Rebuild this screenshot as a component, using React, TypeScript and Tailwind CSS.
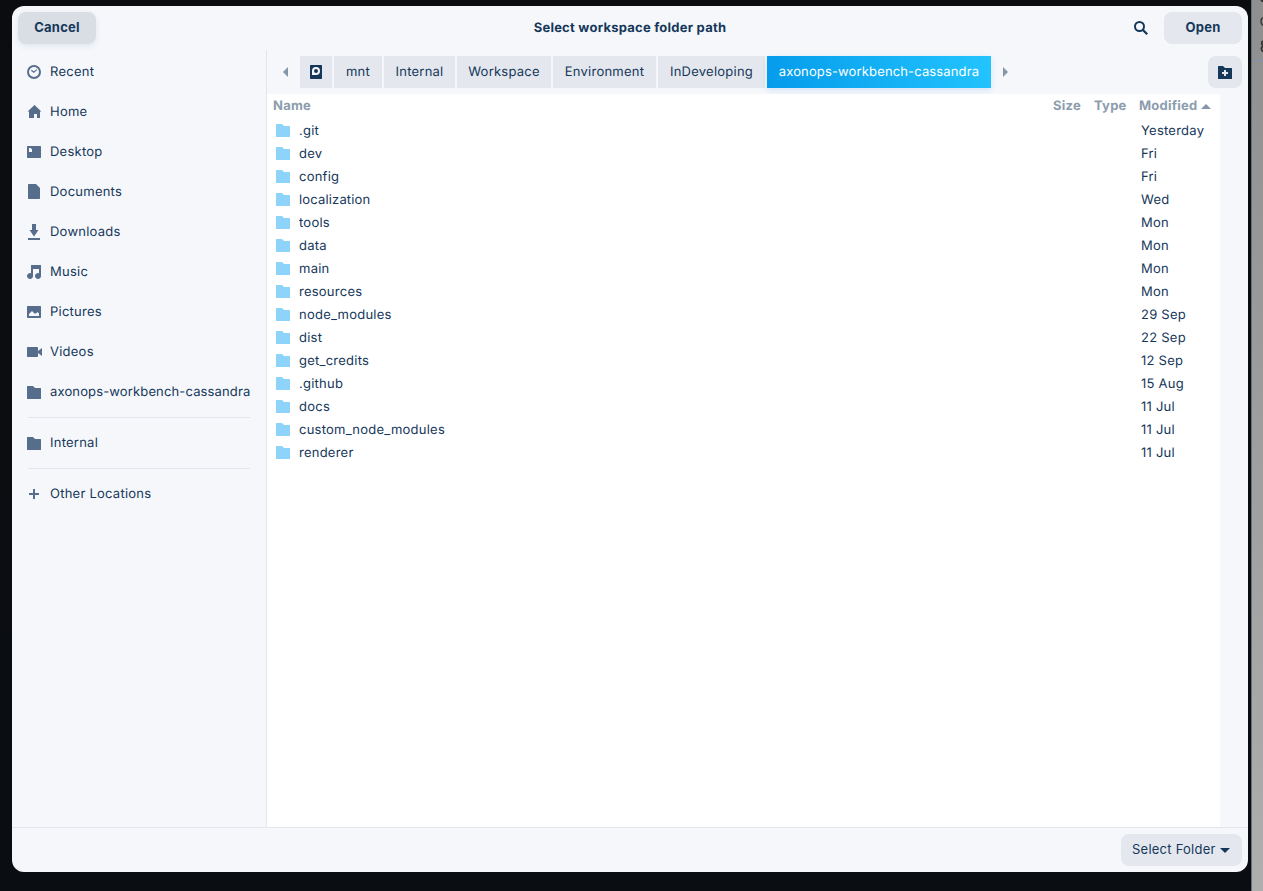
import React from "react";

const PANEL = "#566e8b";

type IconName =
  | "recent"
  | "home"
  | "desktop"
  | "document"
  | "download"
  | "music"
  | "picture"
  | "video"
  | "folder"
  | "plus";

function Folder({ color }: { color: string }) {
  return (
    <svg width="16" height="16" viewBox="0 0 16 16" fill={color}>
      <path d="M1.6 2H7L9 4h5.4c.4 0 .6.2.6.6v9.8c0 .4-.2.6-.6.6H1.6c-.4 0-.6-.2-.6-.6V2.6c0-.4.2-.6.6-.6z" />
    </svg>
  );
}

function Icon({ name }: { name: IconName }) {
  if (name === "folder") return <Folder color={PANEL} />;
  return (
    <svg width="16" height="16" viewBox="0 0 16 16" fill={PANEL}>
      {name === "recent" && (
        <g fill="none" stroke={PANEL}>
          <circle cx="8" cy="8" r="6" strokeWidth="2" />
          <path d="M5.3 6.2 7.8 8.2 10.8 5.6" strokeWidth="1.2" />
        </g>
      )}
      {name === "home" && <path d="M8.5 1 15.4 7.6H14V14h-3v-4H8v4H3V7.6H1.6z" />}
      {name === "desktop" && (
        <path
          fillRule="evenodd"
          d="M1.7 2h12.6c.4 0 .7.3.7.7v10.6c0 .4-.3.7-.7.7H1.7c-.4 0-.7-.3-.7-.7V2.7c0-.4.3-.7.7-.7zM3 4v4h3V5.3L4.7 4z"
        />
      )}
      {name === "document" && (
        <path d="M2.7 0H10l4 4v10.3c0 .4-.3.7-.7.7H2.7c-.4 0-.7-.3-.7-.7V.7c0-.4.3-.7.7-.7z" />
      )}
      {name === "download" && <path d="M6 0h4v6h2.5L8 12.500 3.500 6H6zM2 14h12v2H2z" />}
      {name === "music" && (
        <path d="M5 1h10v11a3 3 0 1 1-2-2.800V5H7v7a3 3 0 1 1-2-2.800z" />
      )}
      {name === "picture" && (
        <path
          fillRule="evenodd"
          d="M1.7 2h12.6c.4 0 .7.3.7.7v10.6c0 .4-.3.7-.7.7H1.7c-.4 0-.7-.3-.7-.7V2.7c0-.4.3-.7.7-.7zM3 12h10V9.500L11.500 8 10 9.500H8.500L6 7 3 10z"
        />
      )}
      {name === "video" && (
        <path d="M1.7 3h9.6c.4 0 .7.3.7.7V7l4-3v8l-4-3v3.3c0 .4-.3.7-.7.7H1.7c-.4 0-.7-.3-.7-.7V3.7c0-.4.3-.7.7-.7z" />
      )}
      {name === "plus" && <path d="M7 3h2v4h4v2H9v4H7V9H3V7h4z" />}
    </svg>
  );
}

function Place({ icon, label }: { icon: IconName; label: string }) {
  return (
    <div className="flex h-10 items-center gap-2 pl-3.5 whitespace-nowrap">
      <Icon name={icon} />
      <span className={label.length > 20 ? "tracking-[0.14px]" : ""}>{label}</span>
    </div>
  );
}

const Separator = () => <div className="mx-4 my-[5px] h-px bg-[#e3e6ec]" />;

const places: [IconName, string][] = [
  ["recent", "Recent"],
  ["home", "Home"],
  ["desktop", "Desktop"],
  ["document", "Documents"],
  ["download", "Downloads"],
  ["music", "Music"],
  ["picture", "Pictures"],
  ["video", "Videos"],
  ["folder", "axonops-workbench-cassandra"],
];

const files = [
  [".git", "Yesterday"],
  ["dev", "Fri"],
  ["config", "Fri"],
  ["localization", "Wed"],
  ["tools", "Mon"],
  ["data", "Mon"],
  ["main", "Mon"],
  ["resources", "Mon"],
  ["node_modules", "29 Sep"],
  ["dist", "22 Sep"],
  ["get_credits", "12 Sep"],
  [".github", "15 Aug"],
  ["docs", "11 Jul"],
  ["custom_node_modules", "11 Jul"],
  ["renderer", "11 Jul"],
];

const crumbs = [
  { label: "mnt", width: "w-12" },
  { label: "Internal", width: "w-[71px]" },
  { label: "Workspace", width: "w-[94px]" },
  { label: "Environment", width: "w-[103px]" },
  { label: "InDeveloping", width: "w-[107px]" },
];

export default function App() {
  return (
    <div className="flex h-[891px] w-[1263px] overflow-hidden bg-[#0b0e13] font-['Inter',sans-serif] text-[13px] leading-4 tracking-[0.24px] text-[#15375a] [text-rendering:geometricPrecision]">
      <div className="w-[1251px] shrink-0 bg-linear-to-b from-[#0b0c0f] to-[#0a0d12] pt-1.5 pl-3">
        <main className="flex h-[866px] w-[1236px] flex-col overflow-hidden rounded-xl bg-[#f5f7fb]">
          <header className="grid h-11 shrink-0 grid-cols-[1fr_auto_1fr] items-center px-1.5 font-bold">
            <button className="h-8 w-[78px] rounded-lg bg-[#d9dee4] pb-0.5 shadow-[0_2px_6px_rgba(20,50,90,0.09)]">
              Cancel
            </button>
            <h1>Select workspace folder path</h1>
            <div className="flex items-center justify-end gap-[15px]">
              <svg width="16" height="16" viewBox="0 0 16 16" fill="none" stroke="#15375a">
                <circle cx="6.5" cy="6.5" r="4.5" strokeWidth="2" />
                <path d="m9.7 9.7 4.500 4.500" strokeWidth="2.3" />
              </svg>
              <button className="h-8 w-[78px] rounded-lg bg-[#e4e7ee] pb-0.5">Open</button>
            </div>
          </header>

          <div className="flex min-h-0 flex-1">
            <aside className="w-[255px] shrink-0 border-r border-[#e3e6ec] pt-0.5">
              {places.map(([icon, label]) => (
                <Place key={label} icon={icon} label={label} />
              ))}
              <Separator />
              <Place icon="folder" label="Internal" />
              <Separator />
              <Place icon="plus" label="Other Locations" />
            </aside>

            <section className="flex min-w-0 flex-1 flex-col">
              <nav className="flex h-11 shrink-0 items-center pr-1.5">
                <svg className="ml-4 mr-[9px]" width="8" height="10" viewBox="0 0 8 10" fill="#8496aa">
                  <path d="M5 0v10L0 5z" />
                </svg>
                <div className="flex gap-0.5">
                  <div className="flex h-8 w-8 items-center justify-center bg-[#e4e7ee]">
                    <svg width="16" height="16" viewBox="0 0 16 16">
                      <rect x="2" y="1" width="12" height="14" rx=".7" fill="#15375a" />
                      <circle cx="8" cy="7" r="3" fill="none" stroke="#f5f7fb" strokeWidth="2" />
                      <path d="M4 7h2v2.500h2V11H4z" fill="#f5f7fb" />
                    </svg>
                  </div>
                  {crumbs.map((c) => (
                    <div key={c.label} className={"flex h-8 items-center justify-center bg-[#e4e7ee] " + c.width}>
                      {c.label}
                    </div>
                  ))}
                  <div className="flex h-8 w-56 items-center justify-center bg-linear-[70deg] from-[#049beb] to-[#23c4fe] tracking-[0.14px] text-white shadow-[0_2px_6px_rgba(20,120,220,0.15)]">
                    axonops-workbench-cassandra
                  </div>
                </div>
                <svg className="ml-3" width="5" height="10" viewBox="0 0 5 10" fill="#8496aa">
                  <path d="M0 0v10l5-5z" />
                </svg>
                <button className="ml-auto flex h-8 w-[34px] items-center justify-center rounded-lg bg-[#e4e7ee]">
                  <svg width="16" height="16" viewBox="0 0 16 16" fill="#15375a">
                    <path
                      fillRule="evenodd"
                      d="M1.6 2H6l2 2h6.400c.4 0 .6.2.6.6v9.800c0 .4-.2.6-.6.6H1.600c-.4 0-.6-.2-.6-.6V2.600c0-.4.2-.6.6-.6zM7 6v2H5v2h2v2h2v-2h2V8H9V6z"
                    />
                  </svg>
                </button>
              </nav>

              <div className="w-[953px] flex-1 bg-white">
                <div className="flex h-[25px] items-center pb-px pl-1.5 font-bold text-[#8c9dae]">
                  <span className="w-[780px]">Name</span>
                  <span className="w-[41px]">Size</span>
                  <span className="w-[45px]">Type</span>
                  <span className="w-[62px]">Modified</span>
                  <svg width="10" height="5" viewBox="0 0 10 5" fill="#8496aa">
                    <path d="M0 5h10L5 0z" />
                  </svg>
                </div>
                {files.map(([name, date]) => (
                  <div key={name} className="flex h-[23px] items-start pt-[3px] pl-2">
                    <Folder color="#8ed3f9" />
                    <span className={"mt-px ml-2 w-[842px] " + (name === "localization" ? "tracking-[0.16px]" : "")}>
                      {name}
                    </span>
                    <span className="mt-px">{date}</span>
                  </div>
                ))}
              </div>
            </section>
          </div>

          <footer className="flex h-[45px] shrink-0 items-center justify-end border-t border-[#e3e6ec] pr-1.5">
            <button className="flex h-8 w-[121px] items-center rounded-lg bg-[#e4e7ee] pl-[11px]">
              <span className="w-[88px] pb-0.5 text-left">Select Folder</span>
              <svg width="10" height="5" viewBox="0 0 10 5" fill="#15375a">
                <path d="M0 0h10L5 5z" />
              </svg>
            </button>
          </footer>
        </main>
      </div>

      <div className="w-3 shrink-0 overflow-hidden border-l border-[#687078] bg-linear-to-b from-[#8f8f90] to-[#aeaeae]">
        <div className="h-[61px] border-b border-[#7f90b0]">
          <svg width="11" height="60" viewBox="0 0 11 60" fill="none" stroke="#333" strokeWidth="1.3">
            <path d="M9 0l2 1.500" strokeWidth="2" />
            <path d="M12 17.500c-2.300.5-3 2-3 4s.7 3.500 3 4" />
            <path d="M12 41c-2 .3-2.300 1-2.300 2.200S10 45.500 12 46c-2 .3-2.600 1.200-2.600 2.700S10 51.200 12 51.500" strokeWidth="1.8" />
          </svg>
        </div>
      </div>
    </div>
  );
}
